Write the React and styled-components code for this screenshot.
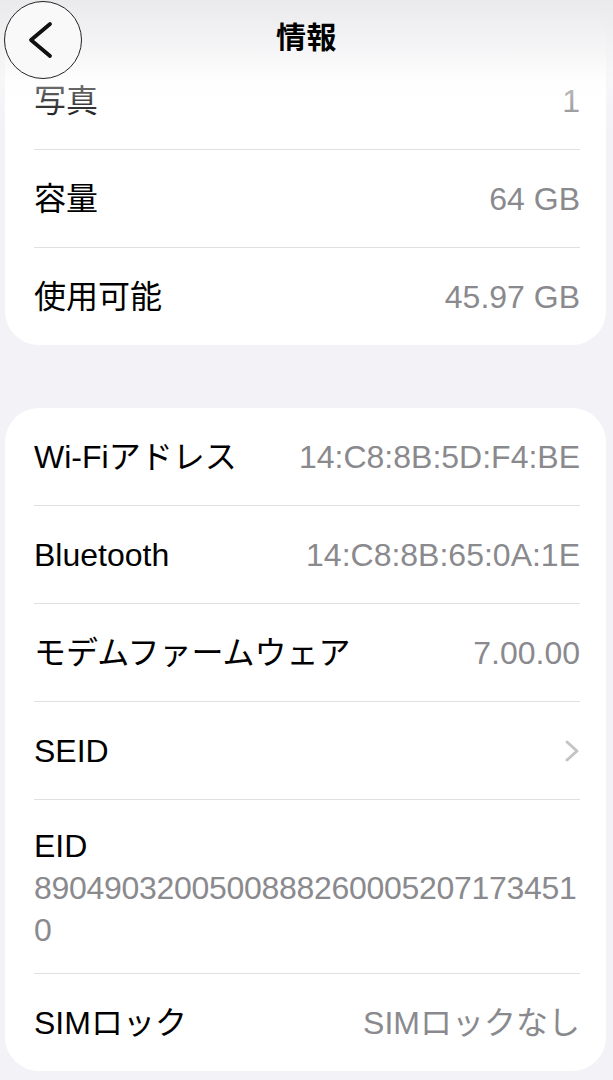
import React from 'react'
import styled, {createGlobalStyle} from 'styled-components'

const GlobalStyle = createGlobalStyle`
    body {
        margin: 0;
        background: #f2f2f7;
        font-family: "Liberation Sans", "Noto Sans CJK JP", sans-serif;
        color: #000;
    }
`

const Page = styled.div`
    position: relative;
    width: 613px;
    min-height: 1080px;
    padding: 0 7px 0 5px;
    box-sizing: border-box;
    overflow: hidden;
    background: #f2f2f7;
`

const Header = styled.header`
    position: absolute;
    top: 0;
    left: 0;
    right: 0;
    height: 132px;
    display: grid;
    grid-template-columns: 1fr auto 1fr;
    align-items: start;
    padding: 1px 4px 0;
    box-sizing: border-box;
    background: linear-gradient(
        to bottom,
        rgba(234, 234, 236, 0.98) 0%,
        rgba(242, 242, 244, 0.9) 32%,
        rgba(252, 252, 252, 0.5) 60%,
        rgba(255, 255, 255, 0.2) 82%,
        rgba(255, 255, 255, 0) 100%
    );
`

const BackButton = styled.button`
    width: 78px;
    height: 78px;
    padding: 0;
    border-radius: 50%;
    border: 1.5px solid #222;
    background: #f9f9fa;
    display: flex;
    align-items: center;
    justify-content: center;
    cursor: pointer;
`

const Title = styled.h1`
    margin: 0;
    padding-top: 18px;
    font-size: 30px;
    line-height: 38px;
    font-weight: 700;
    letter-spacing: 0.5px;
`

const Card = styled.section`
    background: #fff;
    border-radius: 34px;
    padding: ${p => p.$top || 0}px 26px 0 29px;
    margin-top: ${p => p.$gap || 0}px;
`

const Row = styled.div`
    display: flex;
    align-items: center;
    justify-content: space-between;
    height: 97px;
    border-bottom: 1px solid #e0e0e2;
    font-size: 32px;
    &:last-child {
        border-bottom: none;
    }
`

const StackRow = styled(Row)`
    flex-direction: column;
    align-items: stretch;
    justify-content: flex-start;
    height: auto;
    padding: 28px 0 22px;
`

const Label = styled.span`
    line-height: 36px;
    white-space: nowrap;
`

const Value = styled.span`
    color: #8a8a8e;
    line-height: 36px;
    white-space: nowrap;
`

const LongValue = styled.div`
    margin-top: 3px;
    color: #8a8a8e;
    line-height: 42px;
    letter-spacing: -0.3px;
    word-break: break-all;
`

const Chevron = () => (
    <svg width="16" height="24" viewBox="0 0 16 24">
        <path d="M3 3 L13 12 L3 21" fill="none" stroke="#c4c4c7" strokeWidth="3" strokeLinecap="round" strokeLinejoin="round" />
    </svg>
)

const storage = [
    {label: '写真', value: '1'},
    {label: '容量', value: '64 GB'},
    {label: '使用可能', value: '45.97 GB'},
]

const network = [
    {label: 'Wi-Fiアドレス', value: '14:C8:8B:5D:F4:BE'},
    {label: 'Bluetooth', value: '14:C8:8B:65:0A:1E'},
    {label: 'モデムファームウェア', value: '7.00.00'},
]

export default function App() {
    return (
        <Page>
            <GlobalStyle />
            <Card $top={52}>
                {storage.map(item => (
                    <Row key={item.label}>
                        <Label>{item.label}</Label>
                        <Value>{item.value}</Value>
                    </Row>
                ))}
            </Card>

            <Card $gap={63}>
                {network.map(item => (
                    <Row key={item.label}>
                        <Label>{item.label}</Label>
                        <Value>{item.value}</Value>
                    </Row>
                ))}
                <Row>
                    <Label>SEID</Label>
                    <Chevron />
                </Row>
                <StackRow>
                    <Label>EID</Label>
                    <LongValue>89049032005008882600052071734510</LongValue>
                </StackRow>
                <Row>
                    <Label>SIMロック</Label>
                    <Value>SIMロックなし</Value>
                </Row>
            </Card>

            <Header>
                <BackButton aria-label="戻る">
                    <svg width="40" height="40" viewBox="0 0 40 40">
                        <path d="M27 4 L8 20 L27 36" fill="none" stroke="#111" strokeWidth="3.8" strokeLinecap="round" strokeLinejoin="round" />
                    </svg>
                </BackButton>
                <Title>情報</Title>
                <div />
            </Header>
        </Page>
    )
}
